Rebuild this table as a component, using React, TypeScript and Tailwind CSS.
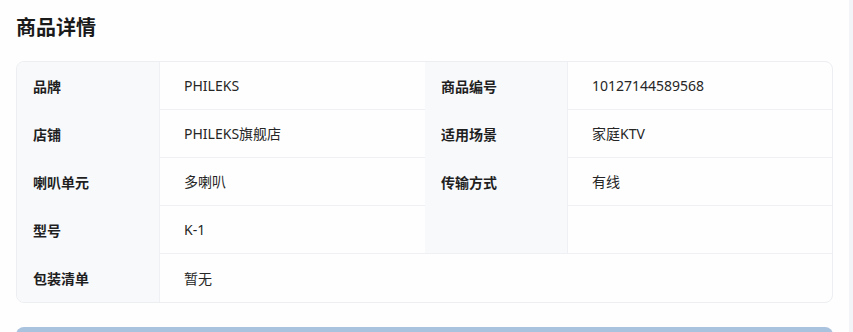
import React from "react";

const font = { fontFamily: '"Noto Sans", "Noto Sans CJK SC", sans-serif' };

function Label({ children, extra = "" }: { children?: React.ReactNode; extra?: string }) {
  return (
    <div className={`flex items-center h-12 pl-4 bg-[#f8f9fb] text-[14px] font-bold text-[#1f1f1f] ${extra}`}>
      {children}
    </div>
  );
}

function Value({ children, extra = "" }: { children?: React.ReactNode; extra?: string }) {
  return (
    <div className={`flex items-center h-12 pl-6 border-l border-[#eef0f3] text-[14px] text-[#262626] ${extra}`}>
      {children}
    </div>
  );
}

export default function App() {
  return (
    <div className="flex w-[853px] h-[332px] overflow-hidden bg-[#fefefe]" style={font}>
      <div className="flex-1 px-4 pt-[14px]">
        <h2 className="text-[20px] leading-[28px] font-bold text-[#1a1a1a]">商品详情</h2>
        <div className="mt-[19px] border border-[#eceef1] rounded-lg overflow-hidden grid grid-cols-[142px_266px_142px_1fr]">
          <Label>品牌</Label>
          <Value extra="border-b">PHILEKS</Value>
          <Label>商品编号</Label>
          <Value extra="border-b">10127144589568</Value>

          <Label>店铺</Label>
          <Value extra="border-b">PHILEKS旗舰店</Value>
          <Label>适用场景</Label>
          <Value extra="border-b">家庭KTV</Value>

          <Label>喇叭单元</Label>
          <Value extra="border-b">多喇叭</Value>
          <Label>传输方式</Label>
          <Value extra="border-b">有线</Value>

          <Label>型号</Label>
          <Value extra="border-b">K-1</Value>
          <Label extra="border-b border-[#eef0f3]"></Label>
          <Value extra="border-b"></Value>

          <Label>包装清单</Label>
          <Value extra="col-span-3">暂无</Value>
        </div>
        <div className="mt-6 h-4 rounded-t-lg bg-[#a9c2de]" />
      </div>
      <div className="w-1 h-full bg-[#f3f4f8]" />
    </div>
  );
}
